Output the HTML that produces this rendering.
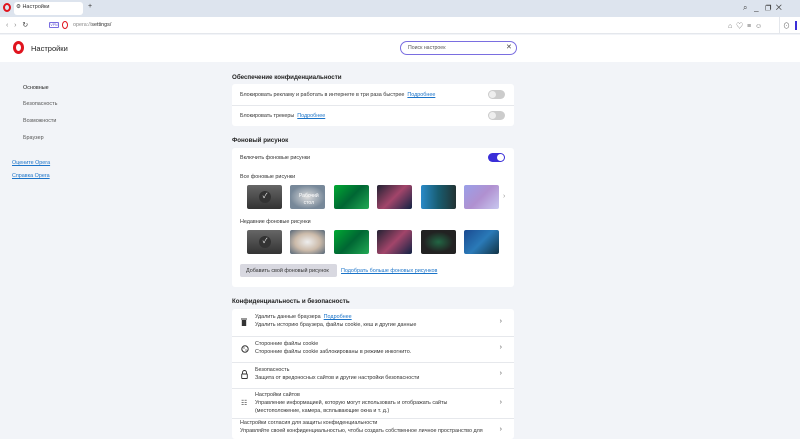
<!DOCTYPE html><html><head><meta charset="utf-8"><style>
*{margin:0;padding:0;box-sizing:border-box}
body{width:800px;height:433px;overflow:hidden;background:#f2f4f8;font-family:"Liberation Sans","Noto Sans CJK SC",sans-serif;position:relative;color:#222}
.a{position:absolute}
.t{font-size:5.4px;color:#333;white-space:nowrap}
.h{font-size:6.2px;font-weight:bold;color:#222;white-space:nowrap}
.l{color:#1a73c8;text-decoration:underline}
.card{background:#fff;border-radius:3px;position:absolute;left:232px;width:282px}
.tg{position:absolute;width:17px;height:9px;border-radius:5px;background:#ccc}
.tg:after{content:"";position:absolute;top:1px;left:1px;width:7px;height:7px;border-radius:50%;background:#eee}
.th{position:absolute;width:35px;height:24px;border-radius:2px}
.row{position:absolute;left:0;width:282px;border-top:1px solid #e6e8ec}
.ch{position:absolute;right:12px;font-size:7px;color:#555}
.ic{position:absolute;left:9px}
</style></head><body>
<div class="a" style="left:0;top:0;width:800px;height:17px;background:#dde4ee"></div>
<div class="a" style="left:3px;top:3px;width:8px;height:9px;border:2px solid #e0141e;border-radius:50%"></div>
<div class="a" style="left:14px;top:2px;width:69px;height:13px;background:#fff;border-radius:3px"></div>
<div class="a t" style="left:16px;top:4px;font-size:5.5px">⚙ Настройки</div>
<div class="a t" style="left:88px;top:3px;font-size:7px">+</div>
<div class="a t" style="left:743px;top:3px;font-size:8px;color:#444">⌕ &nbsp; _ &nbsp; ❐ &nbsp;✕</div>
<div class="a" style="left:0;top:17px;width:800px;height:17px;background:#fff;border-bottom:1px solid #e4e7ec"></div>
<div class="a t" style="left:6px;top:21px;font-size:7px;color:#888">‹ &nbsp; › &nbsp; <span style="color:#444">↻</span></div>
<div class="a" style="left:49px;top:22px;width:10px;height:6px;border:1px solid #7a6ee0;border-radius:1px;font-size:3.5px;color:#5a4ed0;text-align:center;line-height:4px">VPN</div>
<div class="a" style="left:62px;top:21px;width:6px;height:8px;border:1.5px solid #e0141e;border-radius:50%"></div>
<div class="a t" style="left:73px;top:22px;color:#888">opera://<span style="color:#333">settings/</span></div>
<div class="a t" style="left:728px;top:21px;font-size:7px;color:#666">⌂ &nbsp;♡ &nbsp;≡ &nbsp;☺</div>
<div class="a" style="left:779px;top:17px;width:1px;height:17px;background:#e4e7ec"></div>
<div class="a t" style="left:783px;top:21px;font-size:7px;color:#666">⊙</div>
<div class="a" style="left:795px;top:21px;width:2px;height:9px;background:#3b2fd8"></div>
<div class="a" style="left:0;top:35px;width:800px;height:27px;background:#fff"></div>
<div class="a" style="left:13px;top:41px;width:11px;height:13px;border:3px solid #e0141e;border-radius:50%"></div>
<div class="a t" style="left:31px;top:44px;font-size:7.5px;color:#222">Настройки</div>
<div class="a" style="left:400px;top:41px;width:117px;height:14px;border:1px solid #7a6ee0;border-radius:7px"></div>
<div class="a t" style="left:408px;top:45px;font-size:5.2px;color:#555">Поиск настроек</div>
<div class="a t" style="left:506px;top:43px;font-size:7px;color:#444">✕</div>
<div class="a t" style="left:23px;top:85px;color:#222">Основные</div>
<div class="a t" style="left:23px;top:101px;color:#555">Безопасность</div>
<div class="a t" style="left:23px;top:118px;color:#555">Возможности</div>
<div class="a t" style="left:23px;top:135px;color:#555">Браузер</div>
<div class="a t l" style="left:12px;top:160px">Оцените Opera</div>
<div class="a t l" style="left:12px;top:173px">Справка Opera</div>

<div class="a h" style="left:232px;top:74px">Обеспечение конфиденциальности</div>
<div class="card" style="top:84px;height:42px">
<div class="a t" style="left:8px;top:8px">Блокировать рекламу и работать в интернете в три раза быстрее &nbsp;<span class="l">Подробнее</span></div>
<div class="tg" style="left:256px;top:6px"></div>
<div class="row" style="top:21px"></div>
<div class="a t" style="left:8px;top:29px">Блокировать трекеры &nbsp;<span class="l">Подробнее</span></div>
<div class="tg" style="left:256px;top:27px"></div>
</div>

<div class="a h" style="left:232px;top:137px">Фоновый рисунок</div>
<div class="card" style="top:148px;height:139px">
<div class="a t" style="left:8px;top:7px">Включить фоновые рисунки</div>
<div class="tg" style="left:256px;top:5px;background:#3b2fd8"><span></span></div>
<div class="a t" style="left:8px;top:26px">Все фоновые рисунки</div>
<div class="a t" style="left:8px;top:71px">Недавние фоновые рисунки</div>
<div class="a t" style="left:271px;top:45px;color:#999;font-size:7px">›</div>
<div class="a" style="left:8px;top:116px;width:97px;height:13px;background:#d8d8e0;border-radius:2px"></div>
<div class="a t" style="left:14px;top:120px">Добавить свой фоновый рисунок</div>
<div class="a t l" style="left:109px;top:120px">Подобрать больше фоновых рисунков</div>
</div>
<style>.tg span{position:absolute;right:1px;top:1px;width:7px;height:7px;border-radius:50%;background:#fff;z-index:2}.tg:has(span):after{display:none}</style>
<div class="th" style="left:247px;top:185px;background:linear-gradient(#666,#333)"></div>
<div class="th" style="left:290px;top:185px;background:radial-gradient(#ddd,#789 70%)"></div>
<div class="th" style="left:334px;top:185px;background:linear-gradient(135deg,#0a3,#063,#2a5)"></div>
<div class="th" style="left:377px;top:185px;background:linear-gradient(135deg,#223,#a2456a,#124)"></div>
<div class="th" style="left:421px;top:185px;background:linear-gradient(90deg,#2a8ac8,#185c70,#233)"></div>
<div class="th" style="left:464px;top:185px;background:linear-gradient(135deg,#9aa0e8,#b090d0,#c8c8f0)"></div>
<div class="th" style="left:247px;top:230px;background:linear-gradient(#666,#333)"></div>
<div class="th" style="left:290px;top:230px;background:radial-gradient(#eee,#cba 50%,#567)"></div>
<div class="th" style="left:334px;top:230px;background:linear-gradient(135deg,#0a3,#063,#2a5)"></div>
<div class="th" style="left:377px;top:230px;background:linear-gradient(135deg,#223,#a2456a,#124)"></div>
<div class="th" style="left:421px;top:230px;background:radial-gradient(#264,#222 60%)"></div>
<div class="th" style="left:464px;top:230px;background:linear-gradient(135deg,#1a4a90,#2a7ab8,#134)"></div>
<div class="a" style="left:259px;top:191px;width:12px;height:12px;border-radius:50%;background:#333;color:#fff;font-size:7px;text-align:center;line-height:12px">✓</div>
<div class="a" style="left:259px;top:236px;width:12px;height:12px;border-radius:50%;background:#333;color:#fff;font-size:7px;text-align:center;line-height:12px">✓</div>
<div class="a t" style="left:299px;top:193px;color:#fff;font-size:5px;text-align:center;line-height:7px">Рабочий<br>стол</div>

<div class="a h" style="left:232px;top:298px">Конфиденциальность и безопасность</div>
<div class="card" style="top:309px;height:130px">
<svg class="ic" style="top:9px" width="6" height="8" viewBox="0 0 6 8"><rect x="0" y="0.5" width="6" height="1" fill="#333"/><rect x="0.8" y="2" width="4.4" height="6" fill="#333"/></svg>
<div class="a t" style="left:23px;top:5px">Удалить данные браузера &nbsp;<span class="l">Подробнее</span></div>
<div class="a t" style="left:23px;top:13px">Удалить историю браузера, файлы cookie, кеш и другие данные</div>
<div class="ch" style="top:9px">›</div>
<div class="row" style="top:27px"></div>
<svg class="ic" style="top:36px" width="8" height="8" viewBox="0 0 8 8"><circle cx="4" cy="4" r="3.2" fill="none" stroke="#333" stroke-width="1"/><circle cx="3" cy="3" r=".6" fill="#333"/><circle cx="5" cy="5" r=".6" fill="#333"/></svg>
<div class="a t" style="left:23px;top:32px">Сторонние файлы cookie</div>
<div class="a t" style="left:23px;top:40px">Сторонние файлы cookie заблокированы в режиме инкогнито.</div>
<div class="ch" style="top:35px">›</div>
<div class="row" style="top:53px"></div>
<svg class="ic" style="top:61px" width="7" height="9" viewBox="0 0 7 9"><path d="M1.5 4V2.5a2 2 0 0 1 4 0V4" fill="none" stroke="#333" stroke-width=".9"/><rect x=".7" y="4" width="5.6" height="4.5" rx=".5" fill="none" stroke="#333" stroke-width=".9"/></svg>
<div class="a t" style="left:23px;top:58px">Безопасность</div>
<div class="a t" style="left:23px;top:66px">Защита от вредоносных сайтов и другие настройки безопасности</div>
<div class="ch" style="top:61px">›</div>
<div class="row" style="top:79px"></div>
<div class="a t" style="left:9px;top:90px;font-size:7px">☷</div>
<div class="a t" style="left:23px;top:83px">Настройки сайтов</div>
<div class="a t" style="left:23px;top:91px">Управление информацией, которую могут использовать и отображать сайты</div>
<div class="a t" style="left:23px;top:99px">(местоположение, камера, всплывающие окна и т. д.)</div>
<div class="ch" style="top:90px">›</div>
<div class="row" style="top:109px"></div>
<div class="a t" style="left:8px;top:111px">Настройки согласия для защиты конфиденциальности</div>
<div class="a t" style="left:8px;top:119px">Управляйте своей конфиденциальностью, чтобы создать собственное личное пространство для</div>
<div class="ch" style="top:117px">›</div>
</div>
</body></html>
